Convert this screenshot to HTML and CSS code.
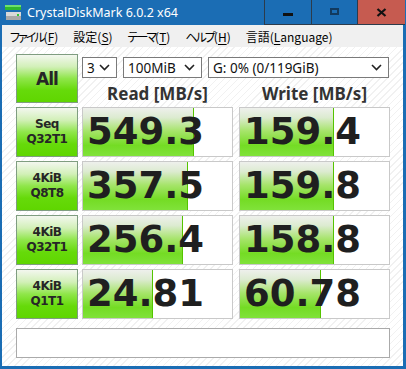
FILE: index.html
```html
<!DOCTYPE html>
<html lang="ja">
<head>
  <meta charset="UTF-8" />
  <title>CrystalDiskMark 6.0.2 x64</title>
  <link rel="stylesheet" href="styles.css">
</head>
<body>
  <div class="window">
    <div class="titlebar">
      <svg class="app-icon" width="18" height="18" viewBox="0 0 18 18">
        <rect x="0" y="1" width="16" height="5" fill="#2fb82f"/>
        <rect x="0" y="1" width="16" height="2" fill="#6ee06e"/>
        <rect x="1" y="8" width="15" height="8" fill="#d9d9d9"/>
        <rect x="1" y="12" width="15" height="4" fill="#a8a8a8"/>
        <rect x="12" y="10" width="2" height="2" fill="#32c832"/>
      </svg>
      <span class="title">CrystalDiskMark 6.0.2 x64</span>
      <div class="caption">
        <div class="cap cap-min"><span class="glyph-min"></span></div>
        <div class="cap cap-max"><span class="glyph-max"></span></div>
        <div class="cap cap-close">
          <svg width="11" height="9" viewBox="0 0 11 9">
            <path d="M1.5 1 L9.5 8 M9.5 1 L1.5 8" stroke="#111" stroke-width="2.2"/>
          </svg>
        </div>
      </div>
    </div>

    <div class="menubar">
      <span class="menu"><span class="kana">ファイル</span>(<u>F</u>)</span>
      <span class="menu">設定(<u>S</u>)</span>
      <span class="menu"><span class="kana">テーマ</span>(<u>T</u>)</span>
      <span class="menu"><span class="kana">ヘルプ</span>(<u>H</u>)</span>
      <span class="menu">言語(<u>L</u>anguage)</span>
    </div>

    <div class="content">
      <div class="grid">
        <div class="btn btn-all">All</div>
        <div class="selects">
          <div class="select sel-count">3<svg class="chev" width="11" height="7" viewBox="0 0 11 7"><path d="M1 1 L5.5 5.5 L10 1" fill="none" stroke="#222" stroke-width="1.6"/></svg></div>
          <div class="select sel-size">100MiB<svg class="chev" width="11" height="7" viewBox="0 0 11 7"><path d="M1 1 L5.5 5.5 L10 1" fill="none" stroke="#222" stroke-width="1.6"/></svg></div>
          <div class="select sel-drive">G: 0% (0/119GiB)<svg class="chev" width="11" height="7" viewBox="0 0 11 7"><path d="M1 1 L5.5 5.5 L10 1" fill="none" stroke="#222" stroke-width="1.6"/></svg></div>
        </div>
        <div class="head">Read [MB/s]</div>
        <div class="head">Write [MB/s]</div>

        <div class="btn btn-test">Seq<br>Q32T1</div>
        <div class="result" style="--w: 111px">549.3</div>
        <div class="result" style="--w: 94px">159.4</div>

        <div class="btn btn-test">4KiB<br>Q8T8</div>
        <div class="result" style="--w: 105px">357.5</div>
        <div class="result" style="--w: 94px">159.8</div>

        <div class="btn btn-test">4KiB<br>Q32T1</div>
        <div class="result" style="--w: 100px">256.4</div>
        <div class="result" style="--w: 94px">158.8</div>

        <div class="btn btn-test">4KiB<br>Q1T1</div>
        <div class="result" style="--w: 70px">24.81</div>
        <div class="result" style="--w: 81px">60.78</div>
      </div>
      <div class="status"></div>
    </div>
  </div>
</body>
</html>
```

FILE: styles.css
```css
body {
  margin: 0;
  background: #1b6db4;
}
.window {
  width: 406px;
  height: 369px;
  background: #1b6db4;
  display: flex;
  flex-direction: column;
  box-sizing: border-box;
  padding: 0 3px 3px 2px;
}

/* title bar */
.titlebar {
  height: 25px;
  display: flex;
  align-items: center;
  margin: 0 -3px 0 -2px;
}
.app-icon {
  margin: 0 4px 0 5px;
}
.title {
  color: #fff;
  font-family: "Noto Sans", sans-serif;
  font-size: 12.5px;
  flex: 1;
}
.caption {
  display: flex;
  align-self: flex-start;
  height: 25px;
  margin-right: 1px;
}
.cap {
  box-sizing: border-box;
  height: 25px;
  width: 46px;
  border-left: 1px solid #2c3b4b;
  border-bottom: 1px solid #2c3b4b;
  display: flex;
  align-items: center;
  justify-content: center;
}
.cap-min {
  width: 47px;
}
.cap-close {
  width: 48px;
  background: #c65b50;
}
.glyph-min {
  width: 10px;
  height: 3px;
  background: #111;
  margin-top: 4px;
}
.glyph-max {
  width: 5px;
  height: 3px;
  border: 2px solid #123a5e;
  margin-bottom: 1px;
}

/* menu */
.menubar {
  height: 22px;
  background: #f0f0f0;
  display: flex;
  align-items: center;
  padding-left: 8px;
  gap: 15px;
  font-family: "Noto Sans CJK JP", sans-serif;
  font-size: 12px;
  font-feature-settings: "palt";
  color: #000;
}
.kana {
  letter-spacing: -2px;
}
.menu u {
  text-decoration-thickness: 1px;
  text-underline-offset: 2px;
}

/* main panel */
.content {
  flex: 1;
  background: repeating-linear-gradient(135deg, #ffffff 0, #ffffff 4px, #f1f1f1 4px, #f1f1f1 5px);
  padding: 7px 0 0 14px;
}
.grid {
  display: grid;
  grid-template-columns: 62px 153px 153px;
  grid-template-rows: 26px 23px repeat(4, 54px);
  column-gap: 4px;
}
.btn {
  box-sizing: border-box;
  border: 1px solid #7f9d80;
  background: linear-gradient(to bottom, #f3f7ef 0%, #d2f0b8 25%, #8fe64a 50%, #66da0a 75%, #5fd600 100%);
  display: flex;
  align-items: center;
  justify-content: center;
  text-align: center;
  font-family: "DejaVu Sans", sans-serif;
  font-weight: bold;
  color: #262626;
}
.btn-all {
  grid-row: 1 / 3;
  font-size: 17px;
  letter-spacing: -1px;
}
.btn-test {
  font-size: 12px;
  letter-spacing: -0.5px;
  line-height: 15px;
  margin-top: 4px;
}
.selects {
  grid-column: 2 / 4;
  display: flex;
  gap: 6px;
  padding-top: 3px;
}
.select {
  box-sizing: border-box;
  height: 21px;
  border: 1px solid #7a7a7a;
  background: #fff;
  display: flex;
  align-items: center;
  justify-content: space-between;
  padding: 0 6px 0 4px;
  font-family: "Noto Sans", sans-serif;
  font-size: 13.5px;
  color: #111;
}
.sel-count { width: 35px; }
.sel-size { width: 79px; }
.sel-drive { width: 181px; }
.head {
  width: 151px;
  text-align: center;
  font-family: "Noto Sans", sans-serif;
  font-weight: bold;
  font-size: 17px;
  line-height: 23px;
  padding-top: 2px;
  color: #333;
}
.result {
  box-sizing: border-box;
  width: 151px;
  margin-top: 4px;
  border: 1px solid #c9c9c9;
  background:
    linear-gradient(#55c400, #55c400) calc(var(--w) - 1px) 0 / 1px 100% no-repeat,
    linear-gradient(to bottom, #eef0ec 0%, #dcebd0 20%, #a6e46a 48%, #74dc24 78%, #80e23a 100%) 0 0 / var(--w) 100% no-repeat,
    #fff;
  font-family: "DejaVu Sans", sans-serif;
  font-weight: bold;
  font-size: 37px;
  line-height: 48px;
  padding-left: 4px;
  color: #1f1f1f;
}
.status {
  box-sizing: border-box;
  width: 374px;
  height: 30px;
  margin-top: 9px;
  border: 1px solid #aaa;
  background: #fff;
}
```
